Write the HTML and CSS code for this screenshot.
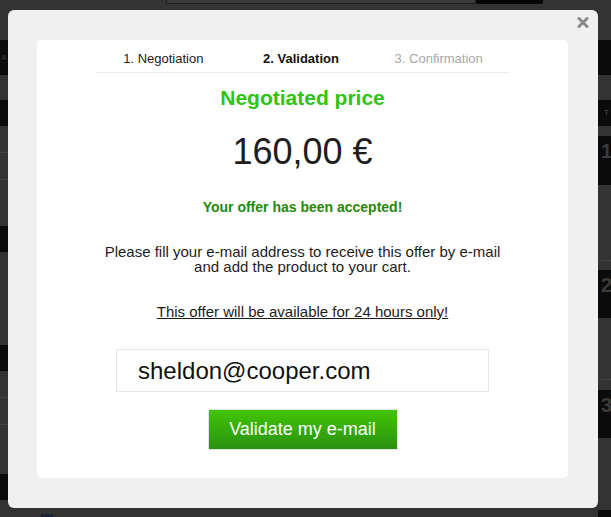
FILE: index.html
```html
<!DOCTYPE html>
<html lang="en">
<head>
<meta charset="utf-8">
<title>Negotiation - Validation</title>
<link rel="stylesheet" href="styles.css">
</head>
<body>
<div class="page">
  <div class="side side-left">
    <div class="band band-a"><span class="ghost">A</span></div>
    <div class="band band-b"></div>
    <div class="dots dots-a"></div>
    <div class="dots"></div>
    <div class="band band-c"></div>
    <div class="band band-d"></div>
    <div class="dots dots-a"></div>
    <div class="dots"></div>
    <div class="band band-e"></div>
  </div>
  <div class="center">
    <div class="topbar">
      <div class="search"></div>
      <div class="search-btn"></div>
    </div>
    <div class="center-fill"></div>
    <div class="foot-icon"></div>
  </div>
  <div class="side side-right">
    <div class="rband rband-a"></div>
    <div class="rband rband-b"><span class="ghost">T</span></div>
    <div class="rband rband-num rband-c"><span class="num">1</span></div>
    <div class="dots dots-r1"></div>
    <div class="rband rband-num rband-d"><span class="num">2</span></div>
    <div class="dots dots-r2"></div>
    <div class="rband rband-num rband-e"><span class="num">3</span></div>
    <div class="rband rband-f"></div>
  </div>
</div>

<div class="modal">
  <button class="close" aria-label="Close">
    <svg width="12" height="11" viewBox="0 0 12 11"><path d="M2 1.5 L10 9.5 M10 1.5 L2 9.5" stroke="#8a8a8a" stroke-width="3" stroke-linecap="round"/></svg>
  </button>
  <div class="card">
    <div class="content">
      <ol class="steps">
        <li class="step">1. Negotiation</li>
        <li class="step step-active">2. Validation</li>
        <li class="step step-todo">3. Confirmation</li>
      </ol>
      <h2 class="title">Negotiated price</h2>
      <div class="price">160,00 €</div>
      <p class="accepted">Your offer has been accepted!</p>
      <p class="info">Please fill your e-mail address to receive this offer by e-mail and add the product to your cart.</p>
      <p class="notice">This offer will be available for 24 hours only!</p>
      <input class="email" type="text" value="sheldon@cooper.com">
      <button class="validate">Validate my e-mail</button>
    </div>
  </div>
</div>
</body>
</html>
```

FILE: styles.css
```css
* { box-sizing: border-box; }

html, body {
  margin: 0;
  padding: 0;
}

body {
  width: 611px;
  height: 517px;
  overflow: hidden;
  background: #333333;
  font-family: "Liberation Sans", Arial, sans-serif;
  position: relative;
}

/* ---------- dimmed page behind the modal ---------- */
.page {
  display: flex;
  height: 517px;
}

.side {
  display: flex;
  flex-direction: column;
}

.side-left { width: 8px; }
.side-right { width: 13px; }

.center {
  flex: 1;
  display: flex;
  flex-direction: column;
}

.band {
  background: #0b0b0b;
  height: 26px;
  overflow: hidden;
}
.band-a { margin-top: 40px; height: 35px; }
.band-b { margin-top: 25px; }
.band-c { margin-top: 46px; }
.band-d { margin-top: 93px; }
.band-e { margin-top: 49px; }

.dots {
  margin-top: 26px;
  border-top: 1px dotted #4a4a4a;
  height: 0;
}
.dots-a { margin-top: 26px; }

.ghost {
  display: block;
  color: #2c2c2c;
  font-weight: bold;
  font-size: 8px;
  line-height: 35px;
  padding-left: 1px;
}

.rband {
  background: #0b0b0b;
  overflow: hidden;
}
.rband-a { margin-top: 40px; height: 35px; }
.rband-b { margin-top: 25px; height: 26px; }
.rband-b .ghost { line-height: 26px; padding-left: 6px; color: #3a3a3a; }
.rband-c { margin-top: 10px; height: 49px; }
.dots-r1 { margin-top: 75px; }
.rband-d { margin-top: 9px; height: 48px; }
.dots-r2 { margin-top: 61px; }
.rband-e { margin-top: 10px; height: 48px; }
.rband-f { margin-top: auto; height: 7px; }

.num {
  display: block;
  color: #3b3b3b;
  font-weight: bold;
  font-size: 20px;
  line-height: 26px;
  padding: 2px 0 0 3px;
}

.topbar {
  display: flex;
  align-items: flex-start;
  height: 10px;
  padding-left: 158px;
}

.search {
  width: 310px;
  height: 4px;
  border: 1px solid #1e1e1e;
  border-top: none;
  background: #3a3a3a;
}

.search-btn {
  width: 67px;
  height: 4px;
  background: #050505;
  border-radius: 0 0 2px 2px;
}

.center-fill { flex: 1; }

.foot-icon {
  width: 12px;
  height: 3px;
  margin-left: 33px;
  background: #1a2433;
}

/* ---------- modal ---------- */
.modal {
  position: absolute;
  left: 8px;
  top: 10px;
  width: 590px;
  height: 498px;
  background: #f0f0f0;
  border-radius: 6px;
  padding: 30px 30px 30px 29px;
}

.close {
  position: absolute;
  top: 7px;
  right: 9px;
  width: 12px;
  height: 11px;
  padding: 0;
  border: 0;
  background: none;
  display: block;
}
.close svg { display: block; }

.card {
  background: #ffffff;
  border-radius: 5px;
  height: 438px;
  display: flex;
  justify-content: center;
}

.content {
  width: 413px;
  display: flex;
  flex-direction: column;
  align-items: center;
  text-align: center;
}

.steps {
  list-style: none;
  margin: 0;
  padding: 11px 0 5px;
  width: 100%;
  display: grid;
  grid-template-columns: 1fr 1fr 1fr;
  border-bottom: 1px solid #ececec;
}

.step {
  font-size: 13px;
  line-height: 16px;
  color: #222222;
  padding-right: 3px;
}
.step-active { font-weight: bold; color: #111111; }
.step-todo { color: #a8a8a8; }

.title {
  margin: 13px 0 0;
  font-size: 21px;
  line-height: 24px;
  font-weight: bold;
  color: #2ec414;
}

.price {
  margin-top: 21px;
  font-size: 36px;
  line-height: 42px;
  color: #1d1d1d;
}

.accepted {
  margin: 26px 0 0;
  font-size: 14px;
  line-height: 16px;
  font-weight: bold;
  color: #1f8a0c;
}

.info {
  margin: 29px 0 0;
  font-size: 15px;
  line-height: 15px;
  color: #1d1d1d;
}

.notice {
  margin: 30px 0 0;
  font-size: 15px;
  line-height: 15px;
  color: #1d1d1d;
  text-decoration: underline;
}

.email {
  margin-top: 30px;
  width: 373px;
  height: 43px;
  border: 1px solid #e6e6e6;
  padding: 0 0 0 21px;
  font-family: "Liberation Sans", Arial, sans-serif;
  font-size: 24px;
  color: #111111;
  background: #ffffff;
  outline: none;
}

.validate {
  margin-top: 17px;
  width: 190px;
  height: 41px;
  border: 1px solid #e4e4e4;
  background: linear-gradient(#42c505, #2a9012);
  color: #ffffff;
  font-family: "Liberation Sans", Arial, sans-serif;
  font-size: 18px;
  padding: 0;
}
```
